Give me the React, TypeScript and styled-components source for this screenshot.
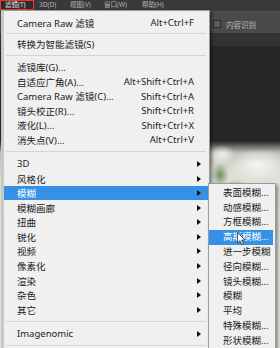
import React from "react";
import styled, { createGlobalStyle, css } from "styled-components";

const GlobalStyle = createGlobalStyle`
  html, body {
    margin: 0;
    padding: 0;
    background: #262626;
  }
  body {
    width: 280px;
    height: 348px;
    overflow: hidden;
    font-family: "Noto Sans", "Noto Sans CJK SC", sans-serif;
  }
`;

const Screen = styled.div`
  position: relative;
  width: 280px;
  height: 348px;
  overflow: hidden;
  display: flex;
  flex-direction: column;
  background: #262626;
`;

const MenuBar = styled.div`
  height: 10px;
  flex: none;
  background: #393939;
  display: flex;
  align-items: center;
  font-size: 6.5px;
  color: #b4b4b4;
`;

const MenuBarItem = styled.div<{ $w: number; $active?: boolean }>`
  width: ${(p) => p.$w}px;
  height: 10px;
  box-sizing: border-box;
  line-height: 10px;
  padding-left: 5px;
  white-space: nowrap;
  ${(p) =>
    p.$active &&
    css`
      border: 1.5px solid #e8332e;
      line-height: 7px;
      padding-left: 4px;
      color: #e6e6e6;
      background: #2c2c2c;
    `}
`;

const OptionsBar = styled.div`
  height: 24px;
  flex: none;
  box-sizing: border-box;
  background: #4a4a4a;
  border-top: 1px solid #3f3f3f;
  border-bottom: 1px solid #2f2f2f;
  display: flex;
  align-items: center;
  justify-content: flex-end;
  padding: 4px 24px 0 0;
  gap: 5px;
  font-size: 7.5px;
  color: #bcbcbc;
`;

const CheckBox = styled.span`
  width: 6px;
  height: 6px;
  border: 1px solid #2a2a2a;
  background: #5c5c5c;
`;

const TabStrip = styled.div`
  height: 12px;
  flex: none;
  background: #333333;
  border-bottom: 1px solid #2a2a2a;
`;

/* the blurred photo sitting on the canvas, seen to the right of the menu */
const Canvas = styled.div`
  flex: 1;
  background:
    radial-gradient(ellipse 9px 12px at 220px 128px, rgba(104, 136, 84, 0.95), rgba(104, 136, 84, 0) 100%),
    radial-gradient(ellipse 12px 8px at 236px 140px, rgba(140, 160, 118, 0.7), rgba(140, 160, 118, 0) 100%),
    radial-gradient(ellipse 30px 16px at 258px 118px, rgba(246, 246, 242, 1), rgba(246, 246, 242, 0) 100%),
    radial-gradient(ellipse 14px 10px at 222px 108px, rgba(238, 240, 232, 1), rgba(238, 240, 232, 0) 100%),
    linear-gradient(#262626 0 94px, #bfc3b8 106px, #dcdfd6 126px, #e6e7e2 170px);
`;

const Dropdown = styled.div`
  position: absolute;
  top: 10px;
  left: 1px;
  width: 209px;
  height: 345px;
  box-sizing: border-box;
  padding-top: 4.7px;
  background: #f0f0f0;
  border: 1px solid #9a9a9a;
  border-left: 3px solid #c4cbc4;
  box-shadow: 2px 2px 3px rgba(0, 0, 0, 0.45);
  font-size: 9.5px;
  color: #222222;
`;

const Item = styled.div<{ $active?: boolean }>`
  position: relative;
  height: 14.6px;
  display: grid;
  grid-template-columns: 1fr auto 14px;
  align-items: center;
  padding-left: 13px;
  white-space: nowrap;
  ${(p) =>
    p.$active &&
    css`
      background: #3591e6;
      color: #ffffff;
    `}
`;

const Shortcut = styled.span`
  text-align: right;
  padding-right: 1px;
`;

const Arrow = styled.span`
  width: 0;
  height: 0;
  margin-left: 2px;
  border-top: 3px solid transparent;
  border-bottom: 3px solid transparent;
  border-left: 4px solid #111;
`;

const Separator = styled.div<{ $h: number }>`
  height: ${(p) => p.$h}px;
  display: flex;
  align-items: center;
  padding: 0 3px 0 2px;
  &::after {
    content: "";
    flex: 1;
    height: 1px;
    background: #d4d4d4;
  }
`;

const SubMenu = styled.div`
  position: absolute;
  top: -3px;
  left: 204px;
  width: 68px;
  height: 170px;
  box-sizing: border-box;
  padding-top: 2px;
  background: #f0f0f0;
  border: 1px solid #9a9a9a;
  box-shadow: 2px 2px 3px rgba(0, 0, 0, 0.4);
  color: #222222;
`;

const SubItem = styled.div<{ $active?: boolean }>`
  position: relative;
  height: 14.8px;
  line-height: 14.8px;
  padding-left: 14px;
  margin-right: 2px;
  white-space: nowrap;
  ${(p) =>
    p.$active &&
    css`
      background: #3591e6;
      color: #ffffff;
    `}
`;

const Pointer = styled.svg`
  position: absolute;
  left: 28px;
  top: 2px;
`;

type Entry =
  | { kind: "item"; label: string; shortcut?: string; arrow?: boolean; active?: boolean }
  | { kind: "sep"; h: number };

const entries: Entry[] = [
  { kind: "item", label: "Camera Raw 滤镜", shortcut: "Alt+Ctrl+F" },
  { kind: "sep", h: 6.4 },
  { kind: "item", label: "转换为智能滤镜(S)" },
  { kind: "sep", h: 8.4 },
  { kind: "item", label: "滤镜库(G)..." },
  { kind: "item", label: "自适应广角(A)...", shortcut: "Alt+Shift+Ctrl+A" },
  { kind: "item", label: "Camera Raw 滤镜(C)...", shortcut: "Shift+Ctrl+A" },
  { kind: "item", label: "镜头校正(R)...", shortcut: "Shift+Ctrl+R" },
  { kind: "item", label: "液化(L)...", shortcut: "Shift+Ctrl+X" },
  { kind: "item", label: "消失点(V)...", shortcut: "Alt+Ctrl+V" },
  { kind: "sep", h: 9.4 },
  { kind: "item", label: "3D", arrow: true },
  { kind: "item", label: "风格化", arrow: true },
  { kind: "item", label: "模糊", arrow: true, active: true },
  { kind: "item", label: "模糊画廊", arrow: true },
  { kind: "item", label: "扭曲", arrow: true },
  { kind: "item", label: "锐化", arrow: true },
  { kind: "item", label: "视频", arrow: true },
  { kind: "item", label: "像素化", arrow: true },
  { kind: "item", label: "渲染", arrow: true },
  { kind: "item", label: "杂色", arrow: true },
  { kind: "item", label: "其它", arrow: true },
  { kind: "sep", h: 9.4 },
  { kind: "item", label: "Imagenomic", arrow: true },
  { kind: "sep", h: 9 },
];

const blurItems = [
  "表面模糊...",
  "动感模糊...",
  "方框模糊...",
  "高斯模糊...",
  "进一步模糊",
  "径向模糊...",
  "镜头模糊...",
  "模糊",
  "平均",
  "特殊模糊...",
  "形状模糊...",
];

const menuBar = [
  { label: "滤镜(T)", w: 34, active: true },
  { label: "3D(D)", w: 31 },
  { label: "视图(V)", w: 34 },
  { label: "窗口(W)", w: 38 },
  { label: "帮助(H)", w: 40 },
];

const App = () => {
  return (
    <Screen>
      <GlobalStyle />
      <MenuBar>
        {menuBar.map((m) => (
          <MenuBarItem key={m.label} $w={m.w} $active={m.active}>
            {m.label}
          </MenuBarItem>
        ))}
      </MenuBar>
      <OptionsBar>
        <CheckBox />
        <span>内容识别</span>
      </OptionsBar>
      <TabStrip />
      <Canvas />

      <Dropdown>
        {entries.map((e, i) =>
          e.kind === "sep" ? (
            <Separator key={i} $h={e.h} />
          ) : (
            <Item key={i} $active={e.active}>
              <span>{e.label}</span>
              <Shortcut>{e.shortcut}</Shortcut>
              {e.arrow ? <Arrow /> : <span />}
              {e.active && (
                <SubMenu>
                  {blurItems.map((b) => (
                    <SubItem key={b} $active={b === "高斯模糊..."}>
                      {b}
                      {b === "高斯模糊..." && (
                        <Pointer width="9" height="14" viewBox="0 0 9 14">
                          <path
                            d="M0.5 0.5 L0.5 11 L3 8.6 L4.8 12.8 L6.4 12.1 L4.7 8 L8 8 Z"
                            fill="#ffffff"
                            stroke="#333"
                            strokeWidth="0.8"
                            strokeLinejoin="round"
                          />
                        </Pointer>
                      )}
                    </SubItem>
                  ))}
                </SubMenu>
              )}
            </Item>
          )
        )}
      </Dropdown>
    </Screen>
  );
};

export default App;
